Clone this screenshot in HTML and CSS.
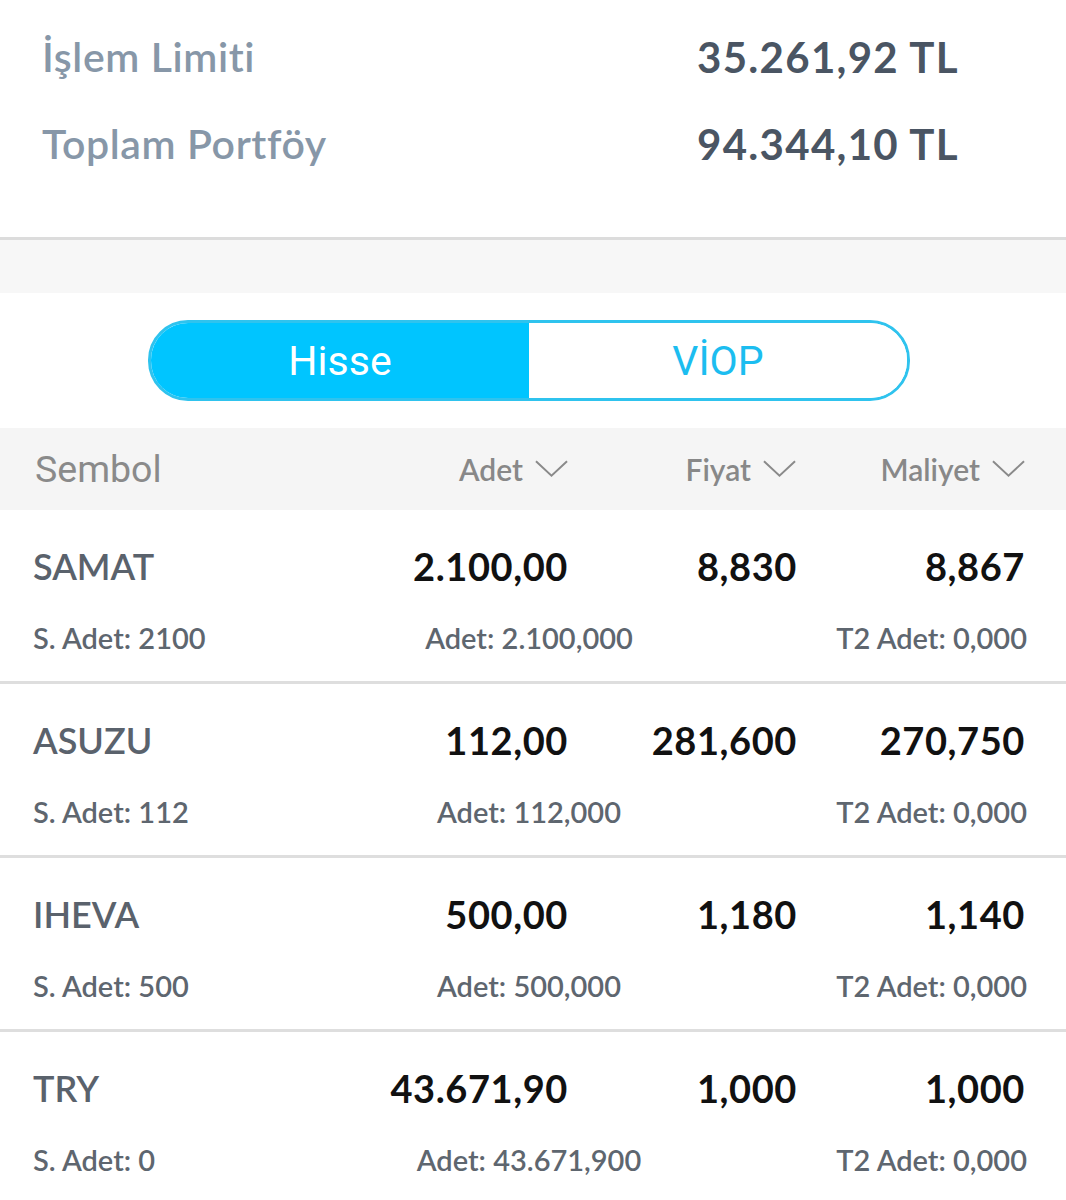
FILE: index.html
```html
<!DOCTYPE html>
<html lang="tr">
<head>
    <meta charset="UTF-8">
    <meta name="viewport" content="width=device-width, initial-scale=1.0">
    <title>Portföy</title>
    <link rel="stylesheet" href="styles.css">
</head>
<body>

    <!-- Ozet bilgiler -->
    <div class="summary">
        <div class="summary-row">
            <span class="summary-label">İşlem Limiti</span>
            <span class="summary-value">35.261,92 TL</span>
        </div>
        <div class="summary-row">
            <span class="summary-label">Toplam Portföy</span>
            <span class="summary-value">94.344,10 TL</span>
        </div>
    </div>

    <div class="spacer"></div>

    <!-- Hisse / VIOP secimi -->
    <div class="segment-wrap">
        <div class="segment">
            <button class="segment-btn active">Hisse</button>
            <button class="segment-btn">VİOP</button>
        </div>
    </div>

    <!-- Tablo basligi -->
    <div class="table-head">
        <span class="head-symbol">Sembol</span>
        <span class="head-col">Adet <svg class="chev" viewBox="0 0 34 18"><path d="M1 1 L17 16 L33 1"/></svg></span>
        <span class="head-col">Fiyat <svg class="chev" viewBox="0 0 34 18"><path d="M1 1 L17 16 L33 1"/></svg></span>
        <span class="head-col">Maliyet <svg class="chev" viewBox="0 0 34 18"><path d="M1 1 L17 16 L33 1"/></svg></span>
    </div>

    <div class="rows">
        <div class="row">
            <div class="row-main">
                <span class="symbol">SAMAT</span>
                <span class="num">2.100,00</span>
                <span class="num">8,830</span>
                <span class="num">8,867</span>
            </div>
            <div class="row-sub">
                <span>S. Adet: 2100</span>
                <span class="sub-mid">Adet: 2.100,000</span>
                <span class="sub-right">T2 Adet: 0,000</span>
            </div>
        </div>
        <div class="row">
            <div class="row-main">
                <span class="symbol">ASUZU</span>
                <span class="num">112,00</span>
                <span class="num">281,600</span>
                <span class="num">270,750</span>
            </div>
            <div class="row-sub">
                <span>S. Adet: 112</span>
                <span class="sub-mid">Adet: 112,000</span>
                <span class="sub-right">T2 Adet: 0,000</span>
            </div>
        </div>
        <div class="row">
            <div class="row-main">
                <span class="symbol">IHEVA</span>
                <span class="num">500,00</span>
                <span class="num">1,180</span>
                <span class="num">1,140</span>
            </div>
            <div class="row-sub">
                <span>S. Adet: 500</span>
                <span class="sub-mid">Adet: 500,000</span>
                <span class="sub-right">T2 Adet: 0,000</span>
            </div>
        </div>
        <div class="row">
            <div class="row-main">
                <span class="symbol">TRY</span>
                <span class="num">43.671,90</span>
                <span class="num">1,000</span>
                <span class="num">1,000</span>
            </div>
            <div class="row-sub">
                <span>S. Adet: 0</span>
                <span class="sub-mid">Adet: 43.671,900</span>
                <span class="sub-right">T2 Adet: 0,000</span>
            </div>
        </div>
    </div>

</body>
</html>
```

FILE: styles.css
```css
body {
    margin: 0;
    font-family: Lato, "Open Sans", sans-serif;
    background: #fff;
}
.summary {
    height: 240px;
    box-sizing: border-box;
    padding: 32px 0 0 42px;
    display: flex;
    flex-direction: column;
    gap: 37px;
    border-bottom: 3px solid #dcdcdc;
}
.summary-row {
    display: flex;
    line-height: 50px;
}
.summary-label {
    width: 655px;
    color: #8797a8;
    font-size: 41px;
    font-weight: 600;
    letter-spacing: 0.6px;
}
.summary-value {
    color: #4a5563;
    font-size: 42px;
    font-weight: 700;
    letter-spacing: 1.3px;
}
.spacer {
    height: 53px;
    background: #f7f7f7;
}
.segment-wrap {
    padding: 27px 8px 27px 0;
    display: flex;
    justify-content: center;
}
.segment {
    width: 762px;
    height: 81px;
    box-sizing: border-box;
    border: 3px solid #2fc3ee;
    border-radius: 40px;
    overflow: hidden;
    display: flex;
}
.segment-btn {
    flex: 1;
    border: 0;
    background: #fff;
    color: #1cbdf0;
    font-family: Roboto, sans-serif;
    font-size: 41px;
    padding: 0;
}
.segment-btn.active {
    background: #00c5ff;
    color: #fff;
}
.table-head {
    height: 82px;
    background: #f5f5f5;
    display: grid;
    grid-template-columns: 300px 233px 228px 229px;
    align-items: center;
    padding: 0 42px 0 35px;
    color: #888;
}
.head-symbol {
    font-family: Roboto, sans-serif;
    font-size: 37.5px;
    color: #8a8a8a;
}
.head-col {
    justify-self: end;
    font-size: 30px;
    font-weight: 600;
    display: flex;
    align-items: center;
    gap: 12px;
}
.chev {
    width: 33px;
    height: 18px;
    fill: none;
    stroke: #8a8a8a;
    stroke-width: 2;
}
.row {
    padding: 34px 41px 25px 33px;
    border-bottom: 3px solid #dedede;
}
.row-main {
    display: grid;
    grid-template-columns: 302px 233px 229px 228px;
    line-height: 44px;
    font-size: 38px;
    font-weight: 700;
}
.symbol {
    color: #5a626c;
    font-size: 36px;
    font-weight: 600;
}
.num {
    text-align: right;
    color: #111;
    letter-spacing: 0.6px;
}
.row-sub {
    margin-top: 32px;
    display: grid;
    grid-template-columns: 1fr auto 1fr;
    line-height: 36px;
    font-size: 29px;
    font-weight: 600;
    color: #5e666f;
}
.sub-right {
    text-align: right;
    margin-right: -2px;
}
```
